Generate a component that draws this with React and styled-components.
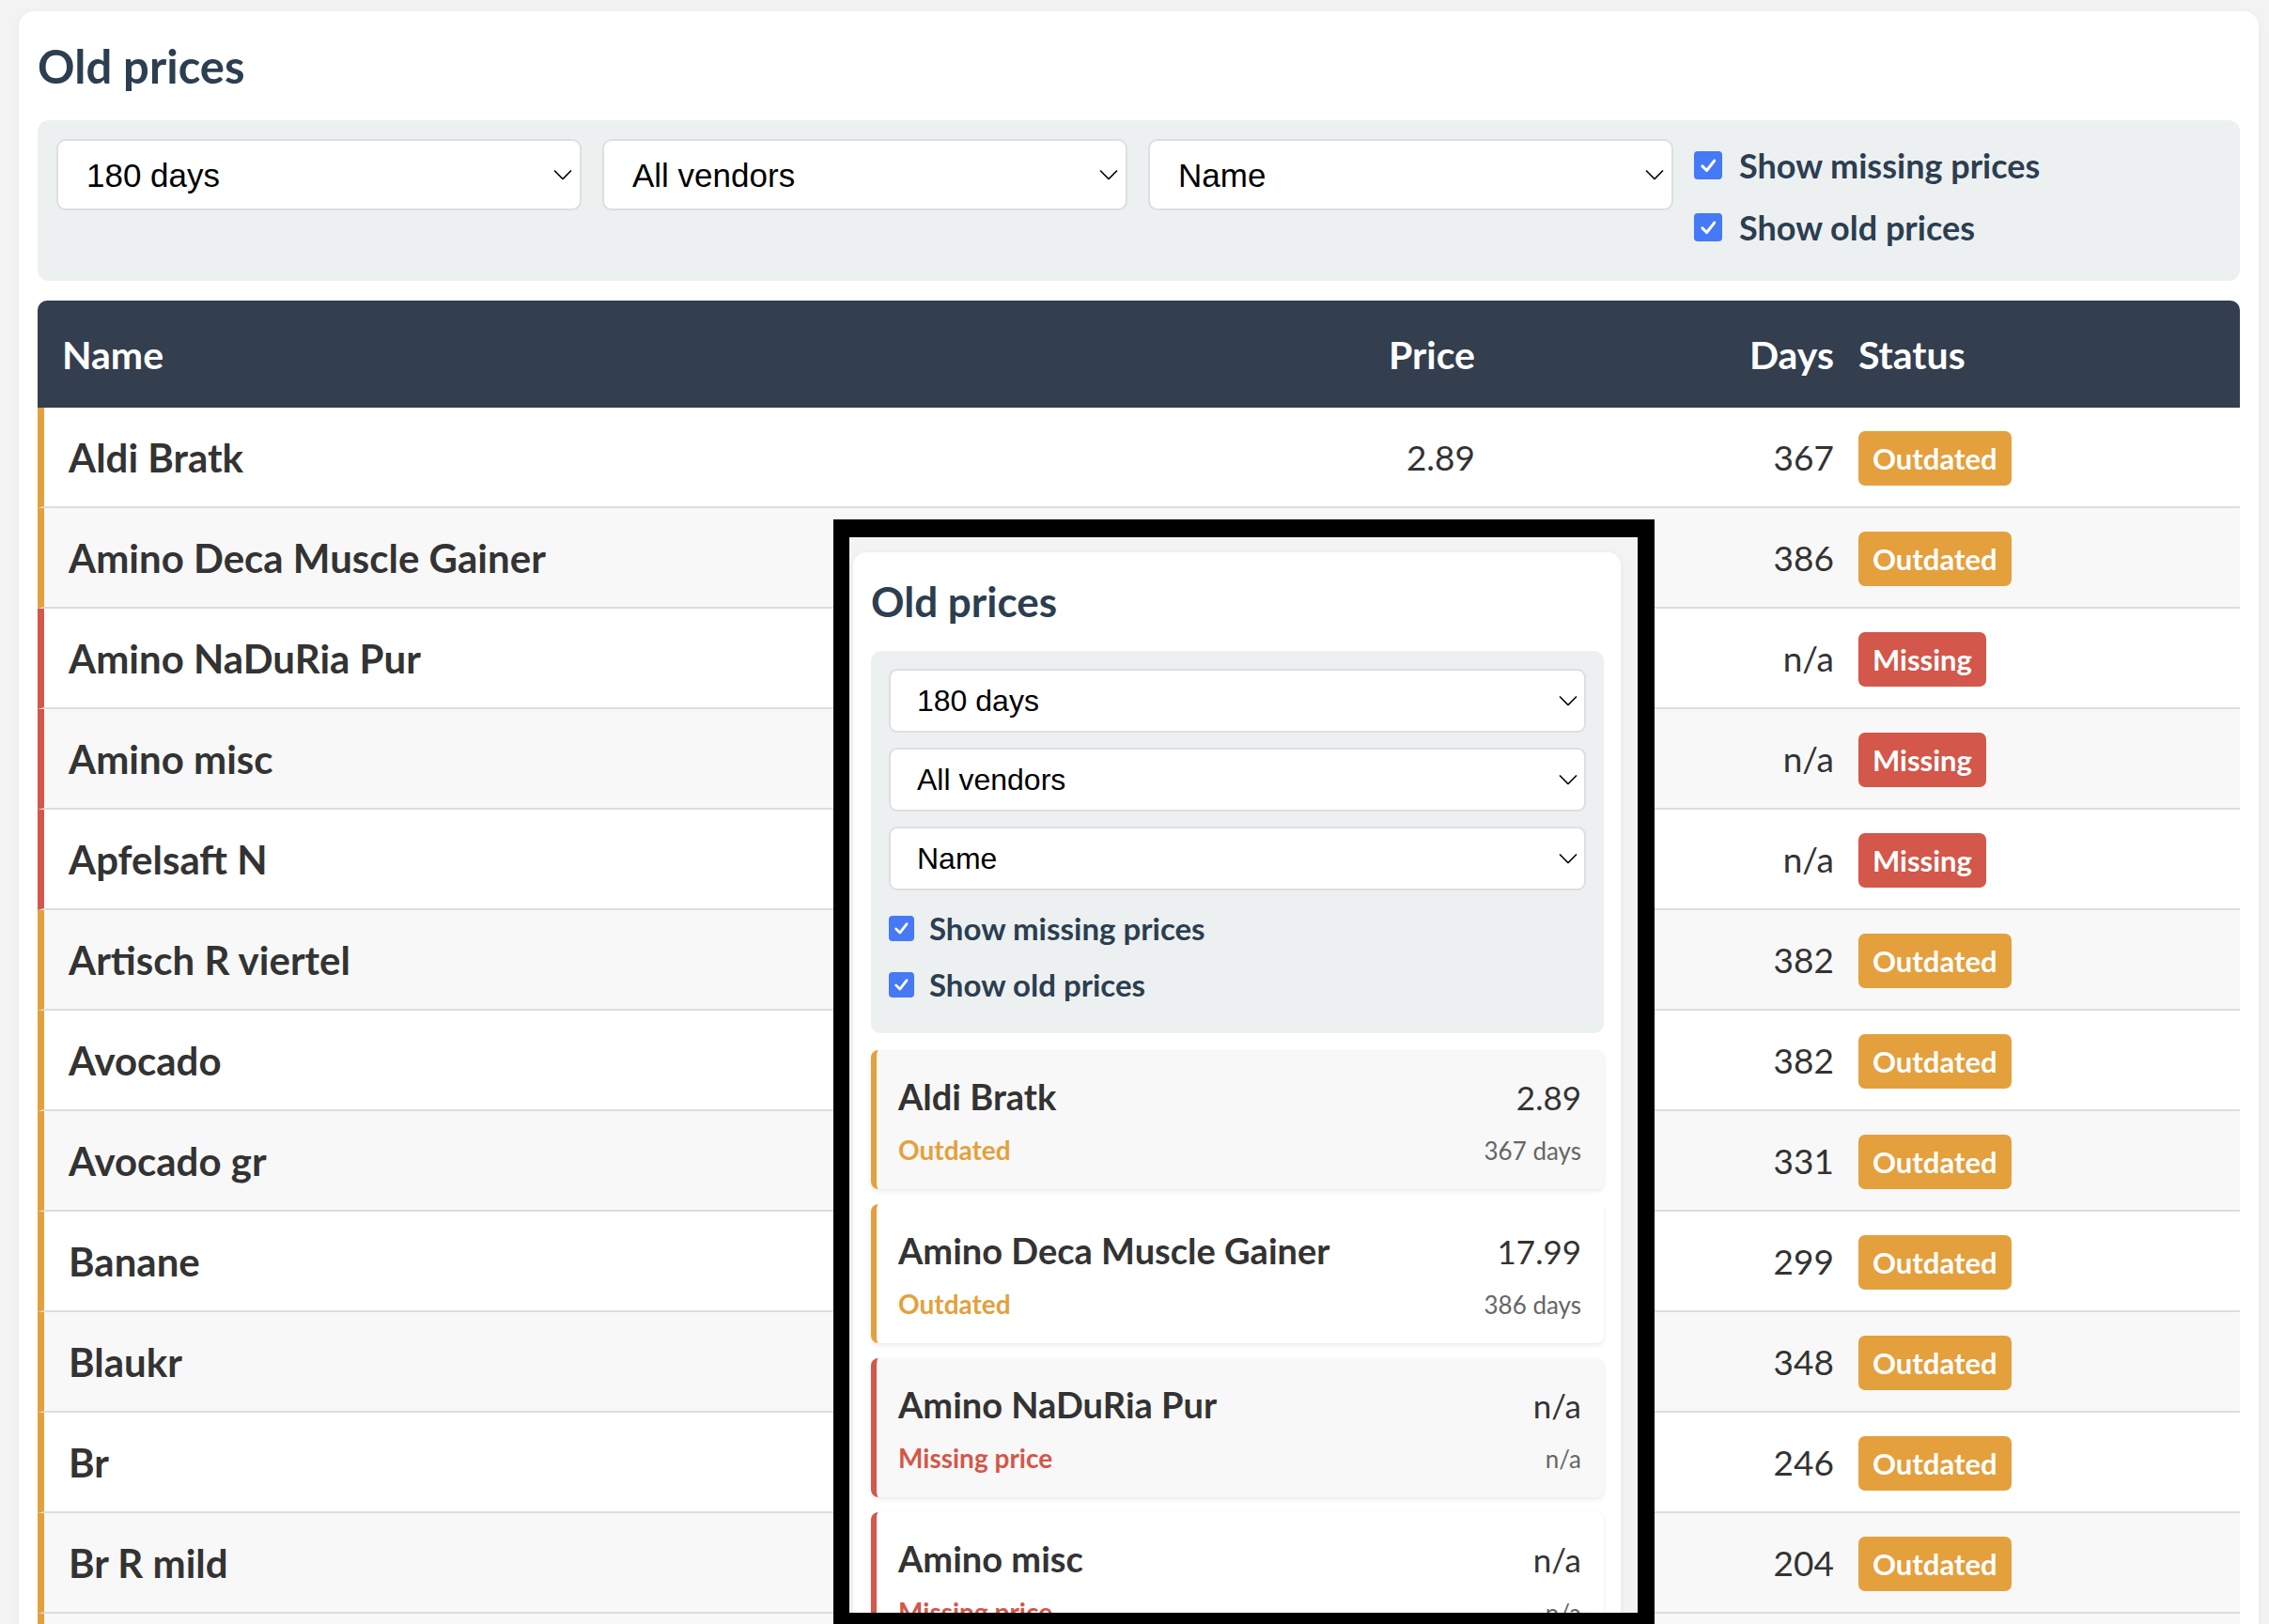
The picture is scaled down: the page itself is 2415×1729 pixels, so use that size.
import React from "react";
import styled, { createGlobalStyle } from "styled-components";

const GlobalStyle = createGlobalStyle`
  html, body {
    margin: 0;
    padding: 0;
    background: #f3f3f3;
  }
  body {
    font-family: Lato, "Noto Sans", sans-serif;
    overflow: hidden;
  }
  #root {
    position: relative;
    height: 1729px;
    overflow: hidden;
  }
`;

const COLORS = {
  outdated: "#e4a03d",
  missing: "#d3574a",
};

const rows = [
  { name: "Aldi Bratk", price: "2.89", days: "367", status: "outdated" },
  { name: "Amino Deca Muscle Gainer", price: "17.99", days: "386", status: "outdated" },
  { name: "Amino NaDuRia Pur", price: "n/a", days: "n/a", status: "missing" },
  { name: "Amino misc", price: "n/a", days: "n/a", status: "missing" },
  { name: "Apfelsaft N", price: "n/a", days: "n/a", status: "missing" },
  { name: "Artisch R viertel", price: "1.49", days: "382", status: "outdated" },
  { name: "Avocado", price: "1.29", days: "382", status: "outdated" },
  { name: "Avocado gr", price: "1.99", days: "331", status: "outdated" },
  { name: "Banane", price: "0.25", days: "299", status: "outdated" },
  { name: "Blaukr", price: "1.19", days: "348", status: "outdated" },
  { name: "Br", price: "2.49", days: "246", status: "outdated" },
  { name: "Br R mild", price: "1.79", days: "204", status: "outdated" },
];

const Page = styled.div`
  padding: 12px 11px 0 20px;
`;

const Card = styled.div`
  background: #fff;
  border-radius: 16px;
  box-shadow: 0 2px 10px rgba(0, 0, 0, 0.05);
  padding: 29px 20px 0 20px;
`;

const Title = styled.h2`
  margin: 0;
  font-size: ${(p) => (p.$small ? 44 : 49)}px;
  line-height: ${(p) => (p.$small ? 53 : 58)}px;
  font-weight: 700;
  color: #2c3e50;
`;

const Filters = styled.div`
  margin-top: 29px;
  background: #ecf0f1;
  border-radius: 12px;
  padding: 20px;
  display: flex;
  gap: 22px;
  align-items: flex-start;
`;

const SelectWrap = styled.div`
  position: relative;
  width: ${(p) => (p.$full ? "100%" : "559px")};
  height: ${(p) => (p.$small ? 68 : 76)}px;
`;

const Select = styled.select`
  appearance: none;
  width: 100%;
  height: 100%;
  box-sizing: border-box;
  border: 2px solid #dedede;
  border-radius: ${(p) => (p.$small ? 9 : 10)}px;
  background: #fff;
  color: #000;
  font-family: "Liberation Sans", Arial, sans-serif;
  font-size: ${(p) => (p.$small ? 32 : 35)}px;
  padding: 0 40px 0 ${(p) => (p.$small ? 28 : 30)}px;
  outline: none;
`;

const Chevron = styled.svg`
  position: absolute;
  right: ${(p) => (p.$small ? 9 : 10)}px;
  top: 50%;
  transform: translateY(-50%);
  pointer-events: none;
`;

const CheckGroup = styled.div`
  display: flex;
  flex-direction: column;
  gap: 20px;
  padding: 5px 0 14px;
`;

const CheckLabel = styled.label`
  display: flex;
  align-items: center;
  gap: ${(p) => (p.$small ? 16 : 18)}px;
  height: ${(p) => (p.$small ? 44 : 46)}px;
  font-size: ${(p) => (p.$small ? 33 : 36)}px;
  font-weight: 700;
  color: #2c3e50;
  white-space: nowrap;
  margin-top: ${(p) => p.$offset || 0}px;
`;

const Box = styled.span`
  width: ${(p) => p.$size}px;
  height: ${(p) => p.$size}px;
  border-radius: 4px;
  background: #4579f5;
  display: flex;
  align-items: center;
  justify-content: center;
  flex: none;
`;

const Table = styled.div`
  margin-top: 21px;
`;

const GridRow = styled.div`
  display: grid;
  grid-template-columns: 1fr 400px 369px 419px;
  align-items: center;
  box-sizing: border-box;
`;

const HeadRow = styled(GridRow)`
  height: 114px;
  background: #333e4f;
  border-radius: 10px 10px 0 0;
  color: #fff;
  font-weight: 700;
  font-size: 41px;
`;

const BodyRow = styled(GridRow)`
  height: 107px;
  border-left: 7px solid ${(p) => COLORS[p.$status]};
  border-bottom: 2px solid #dddddd;
  background: #fff;
  color: #333;

  &:nth-child(odd) {
    background: #f8f8f8;
  }
`;

const Cell = styled.div`
  text-align: ${(p) => (p.$right ? "right" : "left")};
  padding: ${(p) => p.$pad};
  white-space: nowrap;
`;

const NameCell = styled(Cell)`
  font-weight: 700;
  font-size: 42px;
`;

const NumCell = styled(Cell)`
  font-size: 37px;
`;

const StatusCell = styled(Cell)`
  display: flex;
  padding-top: 3px;
`;

const Badge = styled.span`
  display: inline-block;
  height: 58px;
  line-height: 58px;
  padding: 0 15px;
  border-radius: 7px;
  background: ${(p) => COLORS[p.$status]};
  color: #fff;
  font-weight: 700;
  font-size: 31px;
`;

const TailRow = styled.div`
  height: 40px;
  border-left: 7px solid ${COLORS.outdated};
  background: #f8f8f8;
`;

/* phone preview laid over the page */
const Preview = styled.div`
  position: absolute;
  left: 887px;
  top: 553px;
  width: 874px;
  height: 1182px;
  box-sizing: border-box;
  border-style: solid;
  border-color: #000;
  border-width: 19px 18px 18px 17px;
  background: #f3f3f3;
  overflow: hidden;
  padding: 16px 18px 0 4px;
`;

const MobileCard = styled.div`
  background: #fff;
  border-radius: 14px;
  box-shadow: 0 2px 8px rgba(0, 0, 0, 0.05);
  padding: 26px 18px 40px 19px;
`;

const MobileFilters = styled.div`
  margin-top: 26px;
  background: #ecf0f1;
  border-radius: 11px;
  padding: 19px 19px 30px;
  display: flex;
  flex-direction: column;
  gap: 16px;
`;

const ItemList = styled.div`
  margin-top: 18px;
  display: flex;
  flex-direction: column;
  gap: 16px;
`;

const Item = styled.div`
  background: #fff;
  border-radius: 8px;
  border-left: 6px solid ${(p) => COLORS[p.$status]};
  box-shadow: 0 2px 5px rgba(0, 0, 0, 0.09);
  padding: 22px 24px 24px 23px;
  color: #333;

  &:nth-child(odd) {
    background: #f8f8f8;
  }
`;

const ItemLine = styled.div`
  display: flex;
  justify-content: space-between;
  align-items: baseline;
  height: ${(p) => (p.$top ? 54 : 36)}px;
  line-height: ${(p) => (p.$top ? 54 : 36)}px;
  margin-top: ${(p) => (p.$top ? 0 : 12)}px;
`;

const ItemName = styled.span`
  font-weight: 700;
  font-size: 38px;
`;

const ItemPrice = styled.span`
  font-size: 35px;
`;

const ItemStatus = styled.span`
  font-weight: 700;
  font-size: 28px;
  color: ${(p) => COLORS[p.$status]};
`;

const ItemDays = styled.span`
  font-size: 26px;
  color: #666;
`;

function FilterSelect({ value, options, small, full }) {
  return (
    <SelectWrap $small={small} $full={full}>
      <Select $small={small} defaultValue={value}>
        {options.map((o) => (
          <option key={o}>{o}</option>
        ))}
      </Select>
      <Chevron $small={small} width="20" height="11" viewBox="0 0 20 11">
        <path d="M1 1 L10 10 L19 1" fill="none" stroke="#000" strokeWidth="1.6" />
      </Chevron>
    </SelectWrap>
  );
}

function Check({ label, small, offset }) {
  const size = small ? 27 : 30;
  return (
    <CheckLabel $small={small} $offset={offset}>
      <Box $size={size}>
        <svg width={size * 0.62} height={size * 0.62} viewBox="0 0 16 16">
          <path d="M2.5 8.5 L6.5 12.5 L13.5 3.5" fill="none" stroke="#fff" strokeWidth="2.6" strokeLinecap="round" strokeLinejoin="round" />
        </svg>
      </Box>
      {label}
    </CheckLabel>
  );
}

const periods = ["180 days", "90 days", "365 days"];
const vendors = ["All vendors"];
const sorts = ["Name", "Price", "Days"];

export default function App() {
  return (
    <>
      <GlobalStyle />
      <Page>
        <Card>
          <Title>Old prices</Title>
          <Filters>
            <FilterSelect value="180 days" options={periods} />
            <FilterSelect value="All vendors" options={vendors} />
            <FilterSelect value="Name" options={sorts} />
            <CheckGroup>
              <Check label="Show missing prices" />
              <Check label="Show old prices" />
            </CheckGroup>
          </Filters>
          <Table>
            <HeadRow>
              <Cell $pad="0 0 0 26px">Name</Cell>
              <Cell $right $pad="0 26px 0 0">Price</Cell>
              <Cell $right $pad="0 13px 0 0">Days</Cell>
              <Cell $pad="0 0 0 13px">Status</Cell>
            </HeadRow>
            {rows.map((r) => (
              <BodyRow key={r.name} $status={r.status}>
                <NameCell $pad="0 0 0 26px">{r.name}</NameCell>
                <NumCell $right $pad="0 26px 0 0">{r.price}</NumCell>
                <NumCell $right $pad="0 13px 0 0">{r.days}</NumCell>
                <StatusCell $pad="0 0 0 13px">
                  <Badge $status={r.status}>
                    {r.status === "missing" ? "Missing" : "Outdated"}
                  </Badge>
                </StatusCell>
              </BodyRow>
            ))}
            <TailRow />
          </Table>
        </Card>
      </Page>

      <Preview>
        <MobileCard>
          <Title $small>Old prices</Title>
          <MobileFilters>
            <FilterSelect small full value="180 days" options={periods} />
            <FilterSelect small full value="All vendors" options={vendors} />
            <FilterSelect small full value="Name" options={sorts} />
            <Check small offset={2} label="Show missing prices" />
            <Check small label="Show old prices" />
          </MobileFilters>
          <ItemList>
            {rows.slice(0, 6).map((r) => (
              <Item key={r.name} $status={r.status}>
                <ItemLine $top>
                  <ItemName>{r.name}</ItemName>
                  <ItemPrice>{r.price}</ItemPrice>
                </ItemLine>
                <ItemLine>
                  <ItemStatus $status={r.status}>
                    {r.status === "missing" ? "Missing price" : "Outdated"}
                  </ItemStatus>
                  <ItemDays>{r.days === "n/a" ? "n/a" : `${r.days} days`}</ItemDays>
                </ItemLine>
              </Item>
            ))}
          </ItemList>
        </MobileCard>
      </Preview>
    </>
  );
}
